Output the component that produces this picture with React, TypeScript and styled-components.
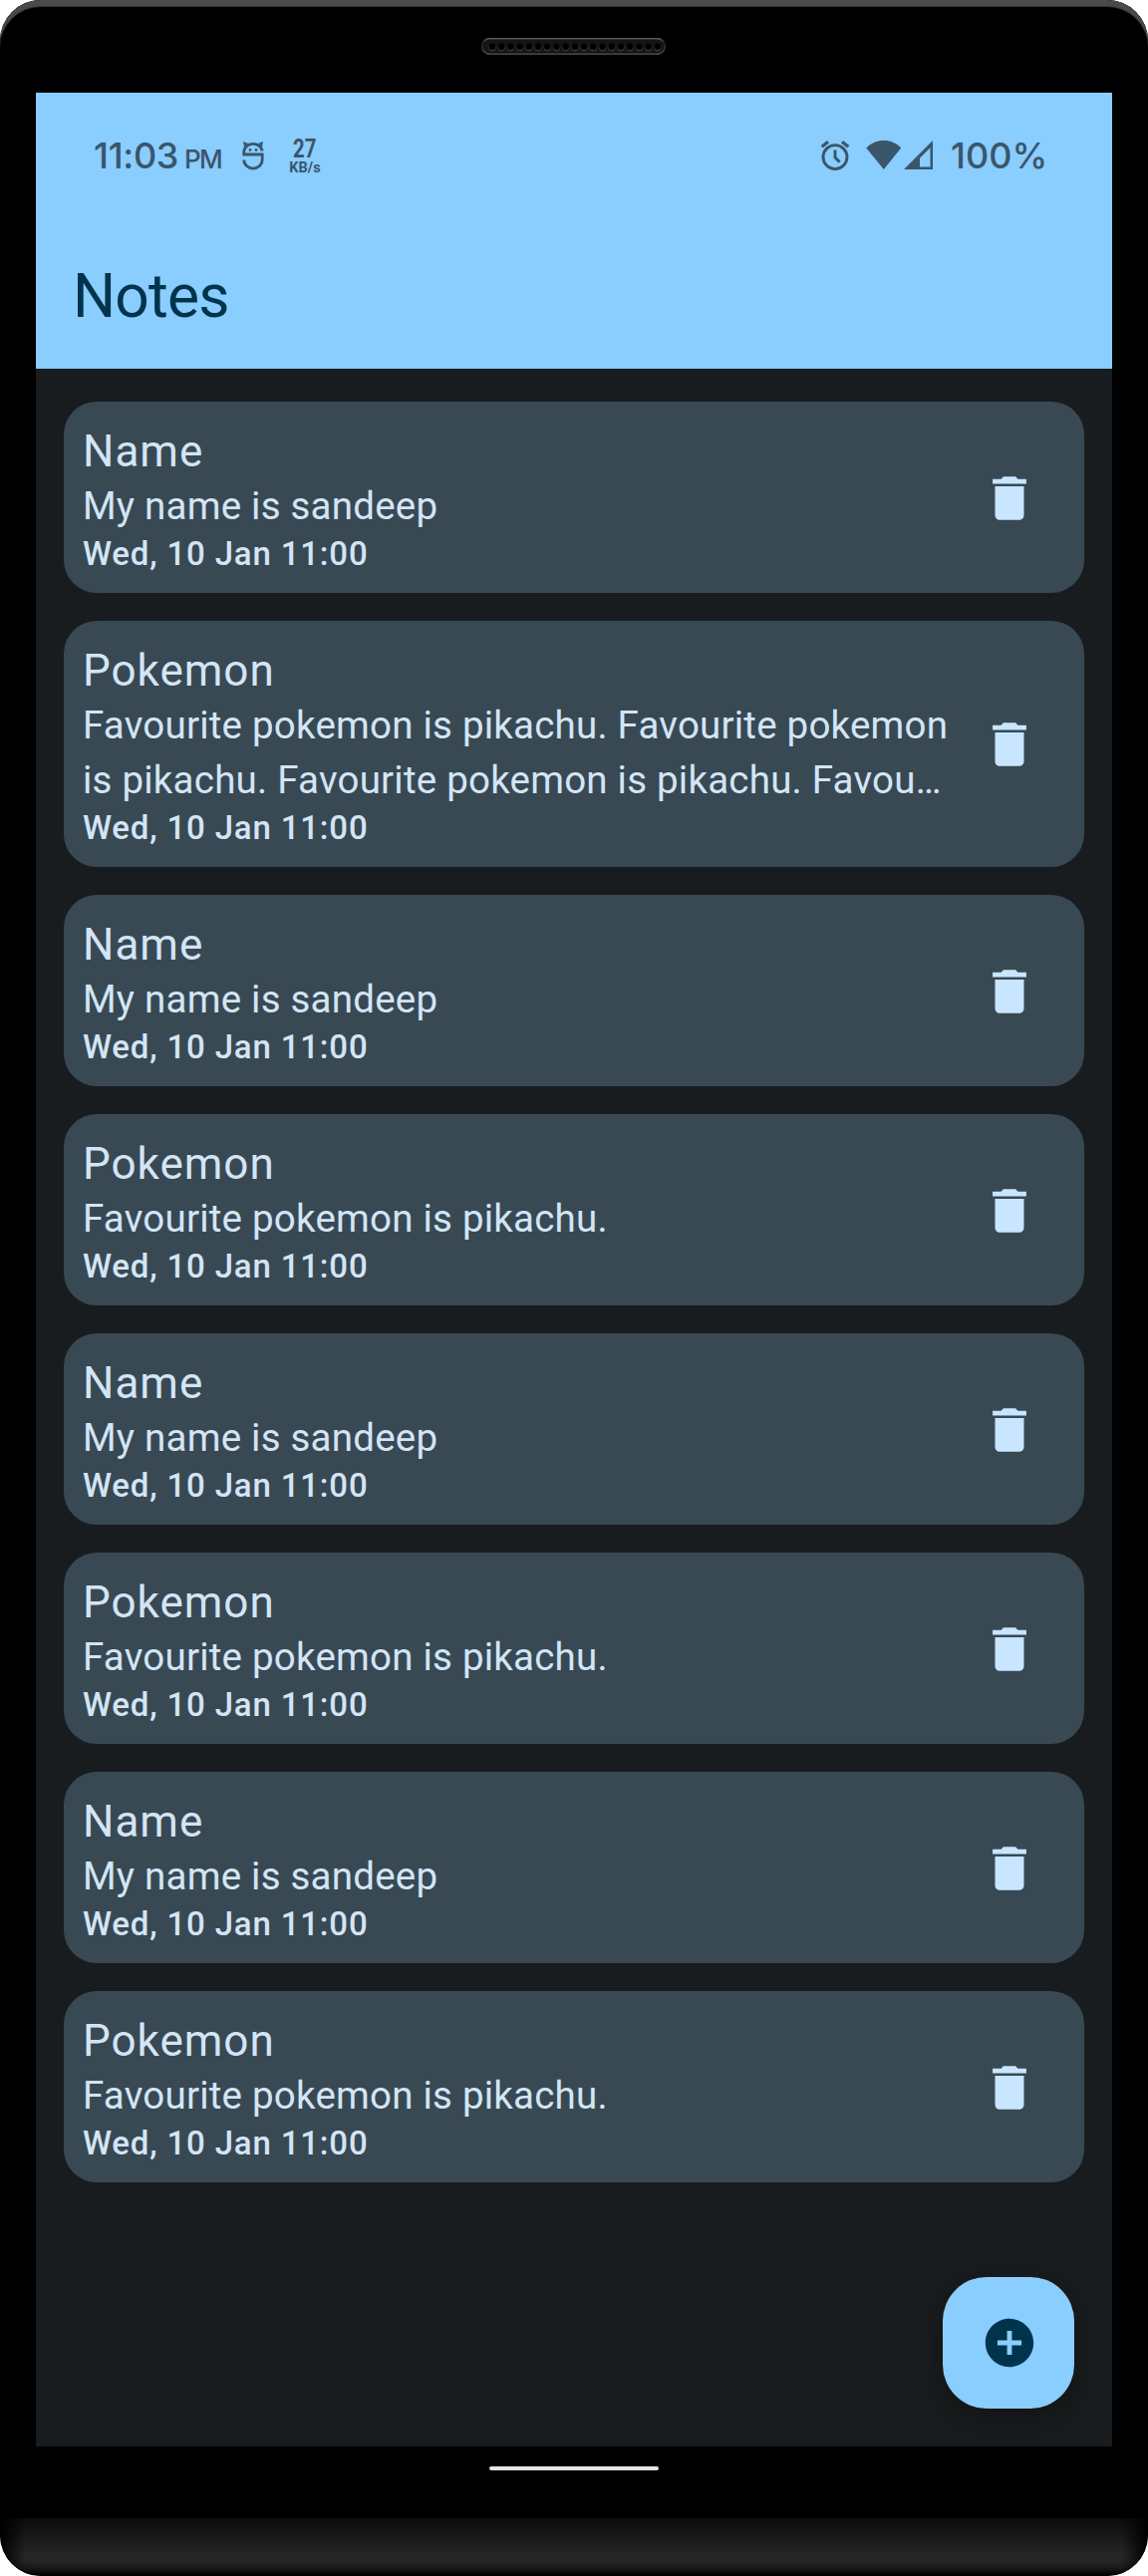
import React from "react";
import styled, { createGlobalStyle } from "styled-components";

const GlobalStyle = createGlobalStyle`
  *, *::before, *::after { box-sizing: border-box; }
  body { margin: 0; background: #fff; font-family: Roboto, "Liberation Sans", sans-serif; }
`;

const INK = "#3a566a";

const Phone = styled.div`
  display: flex;
  flex-direction: column;
  align-items: center;
  width: 1152px;
  height: 2585px;
  overflow: hidden;
  border-radius: 41px;
  background: #000;
`;

const TopEdge = styled.div`
  flex: none;
  width: 100%;
  height: 93px;
  border-radius: 41px 41px 0 0;
  display: flex;
  justify-content: center;
  padding: 38px 1px 0 0;
  background: #000;
  box-shadow: inset 0 7px 1px -1px #4a4a4a, inset 0 7px 0 0 #333;
`;

const Screen = styled.main`
  position: relative;
  flex: none;
  width: 1080px;
  height: 2362px;
  background: #191c1e;
`;

const Header = styled.header`
  height: 277px;
  background: #8acdff;
`;

const StatusBar = styled.div`
  display: flex;
  justify-content: space-between;
  height: 128px;
  padding: 43px 64px 0 58px;
  color: ${INK};
`;

const Cluster = styled.div`
  display: flex;
  align-items: flex-start;
  height: 42px;
`;

const Clock = styled.span`
  width: 91px;
  font: 500 36px/41px Inter, sans-serif;
  letter-spacing: -0.3px;
  white-space: nowrap;
`;

const Meridiem = styled.span`
  width: 48px;
  font: 500 26px/41px Inter, sans-serif;
  letter-spacing: -1.6px;
  padding-top: 3px;
`;

const Glyph = styled.svg<{ $w: number; $ml?: number }>`
  display: block;
  flex: none;
  width: ${(p) => p.$w}px;
  height: 42px;
  margin-left: ${(p) => p.$ml ?? 0}px;
`;

const Speed = styled.div`
  display: flex;
  flex-direction: column;
  align-items: center;
  width: 34px;
  margin-left: 23px;
  font-weight: 700;
`;

const SpeedValue = styled.span`
  font-size: 25.5px;
  line-height: 26px;
  transform: scaleX(0.8);
`;

const SpeedUnit = styled.span`
  font-size: 14.5px;
  line-height: 14px;
`;

const Battery = styled.span`
  width: 98px;
  margin-left: 17px;
  font: 500 36px/41px Inter, sans-serif;
  white-space: nowrap;
`;

const Title = styled.h1`
  margin: 0;
  padding: 38px 0 0 37px;
  font-size: 60.5px;
  line-height: 77px;
  font-weight: 400;
  letter-spacing: -0.8px;
  color: #00344c;
`;

const List = styled.ul`
  display: flex;
  flex-direction: column;
  gap: 28px;
  margin: 0;
  padding: 33px 28px 0;
  list-style: none;
`;

const Card = styled.li`
  display: flex;
  align-items: center;
  justify-content: space-between;
  padding: 24px 46px 18px 19px;
  border-radius: 33px;
  background: #384954;
  color: #d3e5f5;
`;

const NoteText = styled.div`
  width: 877px;
`;

const NoteTitle = styled.h2`
  margin: 0;
  font-size: 44px;
  line-height: 53px;
  font-weight: 400;
  letter-spacing: 1px;
`;

const NoteBody = styled.p`
  margin: 0;
  font-size: 38.5px;
  line-height: 55px;
  letter-spacing: 0.22px;
`;

const NoteDate = styled.time`
  display: block;
  font-size: 33px;
  line-height: 42px;
  font-weight: 500;
  letter-spacing: 0.82px;
`;

const DeleteButton = styled.button`
  display: flex;
  flex: none;
  margin: -5px 0.5px 0 0;
  padding: 0;
  border: 0;
  background: none;
  color: #c8e6ff;
`;

const Fab = styled.button`
  position: absolute;
  right: 38px;
  bottom: 38px;
  display: flex;
  align-items: center;
  justify-content: center;
  width: 132px;
  height: 132px;
  padding: 0 0 0 1px;
  border: 0;
  border-radius: 44px;
  background: #8acdff;
  color: #00344c;
  box-shadow: 0 12px 24px rgba(20, 18, 16, 0.5), 0 4px 12px rgba(20, 18, 16, 0.25);
`;

const NavArea = styled.nav`
  flex: none;
  display: flex;
  justify-content: center;
  width: 100%;
  height: 72px;
  padding-top: 20px;
`;

const HomeHandle = styled.div`
  width: 170px;
  height: 4px;
  border-radius: 2px;
  background: #e4e4e4;
`;

const Chin = styled.div`
  flex: none;
  width: 100%;
  height: 58px;
  border-radius: 0 0 41px 41px;
  background:
    linear-gradient(90deg, #000 0, transparent 26px, transparent calc(100% - 26px), #000 100%),
    linear-gradient(#0b0b0b 0, #171717 18px, #262626 36px, #262626 42px, #191919 50px, #000 57px);
`;

const Speaker = () => (
  <svg width="185" height="17" viewBox="0 0 185 17">
    <defs>
      <linearGradient id="rim" x1="0" y1="0" x2="0" y2="1">
        <stop offset="0" stopColor="#5a5a5a" />
        <stop offset="0.3" stopColor="#1c1c1c" />
        <stop offset="1" stopColor="#484848" />
      </linearGradient>
    </defs>
    <rect x="0.7" y="0.7" width="183.6" height="15.6" rx="7.8" fill="#151515" stroke="url(#rim)" strokeWidth="1.6" />
    {Array.from({ length: 19 }, (_, i) => (
      <g key={i}>
        <circle cx={11 + i * 9.21} cy="9.6" r="3.6" fill="#484848" />
        <circle cx={11 + i * 9.21} cy="8.8" r="3.4" fill="#000" />
      </g>
    ))}
  </svg>
);

const FaceGlyph = () => (
  <Glyph $w={24} $ml={9} viewBox="0 0 24 42" fill="none" stroke={INK} strokeWidth="2.8">
    <path d="M21.200 15.500A9.300 8.300 0 0 0 2.800 15.500V19H21.200V24.500A9.200 8.600 0 0 1 2.800 24.500" />
    <path d="M2 6L7 8L3 11.500ZM22 6L17 8L21 11.500Z" fill={INK} stroke="none" />
    <circle cx="9" cy="14.500" r="1.4" fill={INK} stroke="none" />
    <circle cx="15" cy="14.500" r="1.4" fill={INK} stroke="none" />
  </Glyph>
);

const AlarmGlyph = () => (
  <Glyph $w={30} viewBox="0 0 30 42" fill="none" stroke={INK} strokeWidth="2.9">
    <circle cx="15" cy="21.600" r="12" />
    <path d="M15 14.500V22L19.600 26.600" />
    <path d="M1.700 11.300L8 6.200M28.300 11.300L22 6.200" strokeWidth="3.2" />
  </Glyph>
);

const WifiGlyph = () => (
  <Glyph $w={36} $ml={16} viewBox="0 0 36 42">
    <path d="M0.300 12.500C5 7.500 11 5 17.800 5S30.700 7.500 35.200 12.500L17.800 34Z" fill={INK} />
  </Glyph>
);

const SignalGlyph = () => (
  <Glyph $w={30} $ml={2} viewBox="0 0 30 42">
    <path d="M0 34L29 5V34ZM16 31.600H26.500V12.300L16 22.800Z" fillRule="evenodd" fill={INK} />
  </Glyph>
);

const TrashGlyph = () => (
  <svg width="58" height="58" viewBox="0 0 24 24" fill="currentColor">
    <path d="M6 19c0 1.1.9 2 2 2h8c1.100 0 2-.9 2-2V7H6v12zM19 4h-3.500l-1-1h-5l-1 1H5v2h14V4z" />
  </svg>
);

const PlusGlyph = () => (
  <svg width="58" height="58" viewBox="0 0 24 24" fill="currentColor">
    <path d="M12 2C6.480 2 2 6.480 2 12s4.480 10 10 10 10-4.480 10-10S17.520 2 12 2zm5 11h-4v4h-2v-4H7v-2h4V7h2v4h4v2z" />
  </svg>
);

type Note = { title: string; body: string };

const sandeep: Note = { title: "Name", body: "My name is sandeep" };
const pikachu: Note = { title: "Pokemon", body: "Favourite pokemon is pikachu." };
const longPikachu: Note = {
  title: "Pokemon",
  body: "Favourite pokemon is pikachu. Favourite pokemon is pikachu. Favourite pokemon is pikachu. Favou…",
};

const notes: Note[] = [sandeep, longPikachu, sandeep, pikachu, sandeep, pikachu, sandeep, pikachu];

const NoteCard = ({ note }: { note: Note }) => (
  <Card>
    <NoteText>
      <NoteTitle>{note.title}</NoteTitle>
      <NoteBody>{note.body}</NoteBody>
      <NoteDate>Wed, 10 Jan 11:00</NoteDate>
    </NoteText>
    <DeleteButton aria-label="Delete note">
      <TrashGlyph />
    </DeleteButton>
  </Card>
);

export default function App() {
  return (
    <>
      <GlobalStyle />
      <Phone>
        <TopEdge>
          <Speaker />
        </TopEdge>
        <Screen>
          <Header>
            <StatusBar>
              <Cluster>
                <Clock>11:03</Clock>
                <Meridiem>PM</Meridiem>
                <FaceGlyph />
                <Speed>
                  <SpeedValue>27</SpeedValue>
                  <SpeedUnit>KB/s</SpeedUnit>
                </Speed>
              </Cluster>
              <Cluster>
                <AlarmGlyph />
                <WifiGlyph />
                <SignalGlyph />
                <Battery>100%</Battery>
              </Cluster>
            </StatusBar>
            <Title>Notes</Title>
          </Header>
          <List>
            {notes.map((note, i) => (
              <NoteCard key={i} note={note} />
            ))}
          </List>
          <Fab aria-label="Add note">
            <PlusGlyph />
          </Fab>
        </Screen>
        <NavArea>
          <HomeHandle />
        </NavArea>
        <Chin />
      </Phone>
    </>
  );
}
